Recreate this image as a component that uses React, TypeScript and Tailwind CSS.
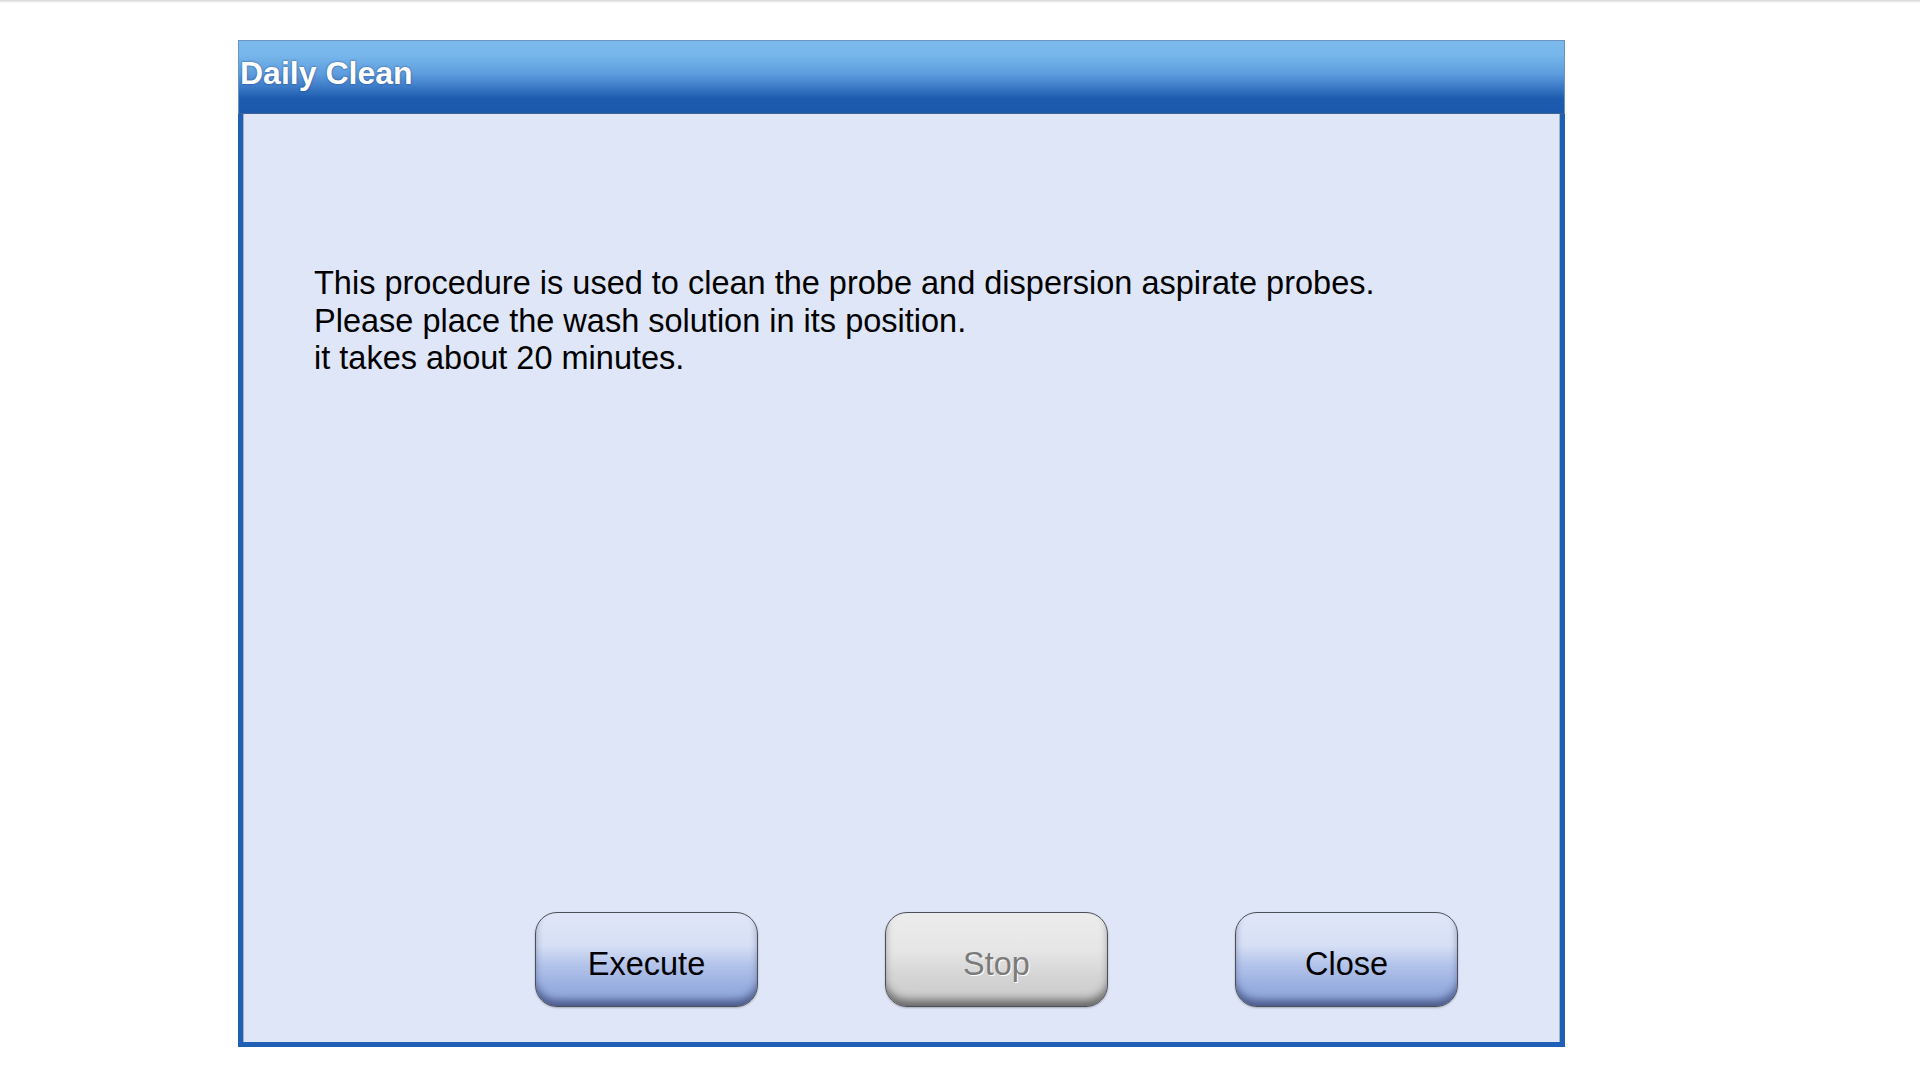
const buttonBase =
  "flex items-center justify-center pt-[10px] w-[223px] h-[95px] rounded-[22px] border-[1.5px] border-[#4b4f58] text-[32.5px]";

const blueButton =
  "bg-[linear-gradient(to_bottom,#dfe6f8_0%,#d6dff5_35%,#b4c4ea_55%,#98aee0_80%,#93aadf_100%)] shadow-[inset_0_-8px_8px_-2px_rgba(25,35,80,0.6),0_1px_2px_rgba(0,0,0,0.25)] text-black";

const greyButton =
  "bg-[linear-gradient(to_bottom,#ececec_0%,#e6e6e6_40%,#d6d6d6_65%,#c9c9c9_100%)] shadow-[inset_0_-8px_8px_-2px_rgba(40,40,40,0.6),0_1px_2px_rgba(0,0,0,0.25)] text-[#7b7b7b] [text-shadow:1px_1px_0_#ffffff]";

const App = () => {
  const lines = [
    "This procedure is used to clean the probe and dispersion aspirate probes.",
    "Please place the wash solution in its position.",
    "it takes about 20 minutes.",
  ];

  return (
    <div className="min-h-screen w-full bg-white font-['Liberation_Sans',Arial,sans-serif]">
      <div className="h-[3px] bg-gradient-to-b from-[#d6d6d6] to-white" />
      <div className="ml-[238px] mt-[37px] flex h-[1007px] w-[1327px] flex-col">
        {/* title bar */}
        <div className="h-[74px] border border-b-[#3f6294] border-[#6a93bf] bg-[linear-gradient(to_bottom,#7abaed_0%,#76b6ea_20%,#5e9dde_45%,#3a78c6_65%,#1d5bae_80%,#1b59ad_100%)] pl-[1px] pt-[16px]">
          <h1 className="text-[32px] font-bold leading-none text-white [text-shadow:0_0_2px_rgba(10,30,80,0.7)]">
            Daily Clean
          </h1>
        </div>
        {/* body */}
        <div className="flex flex-1 flex-col border-[5px] border-t-0 border-[#1f5fb5] bg-[#dfe6f8] shadow-[inset_1px_0_0_#a7b1c4,inset_-1px_0_0_#a7b1c4]">
          <div className="pl-[71px] pt-[151px] text-[32.5px] leading-[37.5px] text-black">
            {lines.map((line) => (
              <p key={line}>{line}</p>
            ))}
          </div>
          <div className="mt-auto flex justify-end gap-[127px] pb-[35px] pr-[102px]">
            <button className={`${buttonBase} ${blueButton}`}>Execute</button>
            <button className={`${buttonBase} ${greyButton}`}>Stop</button>
            <button className={`${buttonBase} ${blueButton}`}>Close</button>
          </div>
        </div>
      </div>
    </div>
  );
};

export default App;
